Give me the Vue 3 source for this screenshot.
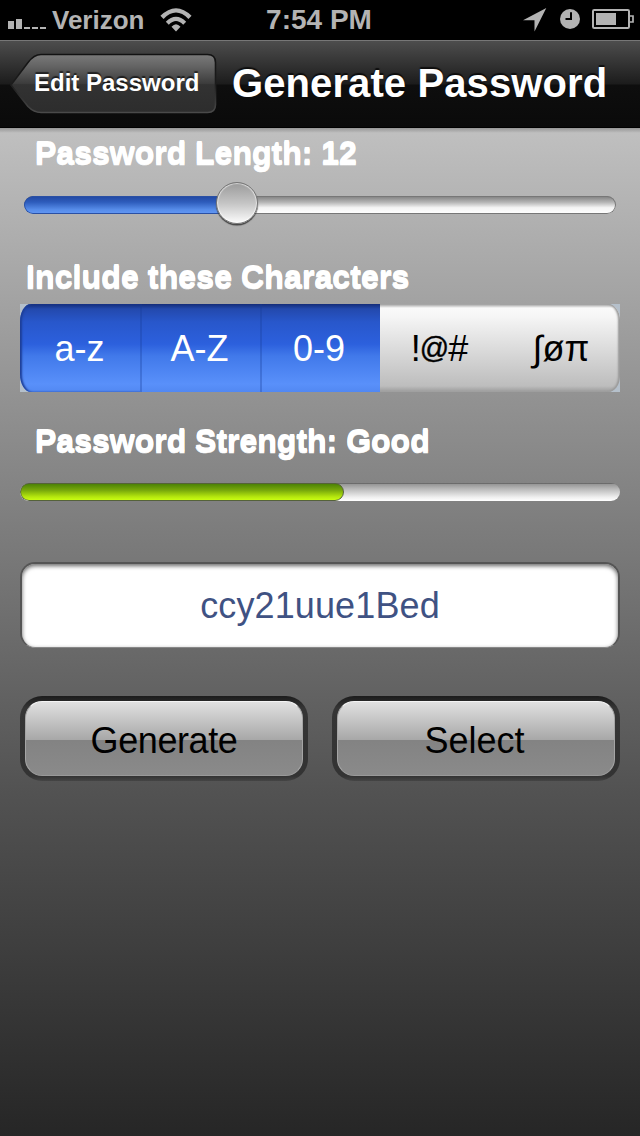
<script setup>
import { ref, computed } from 'vue'

const length = ref(12)
const sliderPercent = ref(36)
const strength = ref({ label: 'Good', percent: 54 })
const password = ref('ccy21uue1Bed')
const sets = ref([
  { id: 'lower', label: 'a-z', on: true },
  { id: 'upper', label: 'A-Z', on: true },
  { id: 'digit', label: '0-9', on: true },
  { id: 'symbol', label: '!@#', on: false },
  { id: 'extra', label: '∫øπ', on: false },
])
const fill = computed(() => ({ width: sliderPercent.value + '%' }))
const thumb = computed(() => ({ left: sliderPercent.value + '%' }))
const meter = computed(() => ({ width: strength.value.percent + '%' }))
</script>

<template>
  <div class="screen">
    <header class="status">
      <div class="status-left">
        <svg class="signal" width="38" height="10" viewBox="0 0 38 10">
          <path d="M0 2h6v8H0zM8 0h6v10H8zM16 8h6v2h-6zM24 8h6v2h-6zM32 8h6v2h-6z" />
        </svg>
        <span class="carrier">Verizon</span>
        <svg class="wifi" width="32" height="24" viewBox="0 0 32 24">
          <g fill="none" stroke="#b3b3b3">
            <path d="M2 9.400Q16-4.600 30 9.400" stroke-width="4.400" />
            <path d="M7.300 15.200Q16 6.400 24.700 15.200" stroke-width="4.200" />
          </g>
          <path d="M11.500 18.800Q16 13.600 20.500 18.800L16 23.400z" />
        </svg>
      </div>
      <span class="time">7:54 PM</span>
      <div class="status-right">
        <svg width="24" height="24" viewBox="0 0 24 24"><path d="M23.3 0L11.5 23.5V12.2H0z" /></svg>
        <svg class="clock" width="20" height="20" viewBox="0 0 20 20">
          <circle cx="10" cy="10" r="10" />
          <path d="M11 3.300V10H5.500" fill="none" stroke="#000" stroke-width="2" />
        </svg>
        <svg class="battery" width="42" height="20" viewBox="0 0 42 20">
          <rect x="1" y="1" width="36" height="18" rx="1.2" fill="none" stroke="#b3b3b3" stroke-width="2" />
          <rect x="4" y="4" width="20" height="12" />
          <path d="M38 7h3v6h-3" fill="none" stroke="#b3b3b3" stroke-width="1.7" />
        </svg>
      </div>
    </header>

    <nav class="nav">
      <button class="back">
        <svg class="back-shape" width="208" height="62" viewBox="0 0 208 62">
          <defs>
            <linearGradient id="backFill" x1="0" y1="0" x2="0" y2="1">
              <stop offset="0" stop-color="#7a7a7a" />
              <stop offset=".2" stop-color="#646464" />
              <stop offset=".5" stop-color="#3c3c3c" />
              <stop offset=".52" stop-color="#323232" />
              <stop offset="1" stop-color="#2d2d2d" />
            </linearGradient>
            <linearGradient id="backEdge" x1="0" y1="0" x2="0" y2="1">
              <stop offset="0" stop-color="#121212" />
              <stop offset=".5" stop-color="#1c1c1c" />
              <stop offset="1" stop-color="#4a4a4a" />
            </linearGradient>
          </defs>
          <path
            d="M1 32L18 9.500Q24 1.500 31 1.500H197.500Q205.500 1.500 205.500 9.500V51.500Q205.500 59.500 197.500 59.500H31Q24 59.500 18 53.500Z"
            fill="url(#backFill)"
            stroke="url(#backEdge)"
            stroke-width="1.600"
          />
        </svg>
        <span class="back-text">Edit Password</span>
      </button>
      <h1 class="title">Generate Password</h1>
    </nav>

    <main class="body">
      <h2 class="label">Password Length: {{ length }}</h2>
      <div class="slider">
        <div class="track"><div class="track-fill" :style="fill"></div></div>
        <div class="thumb" :style="thumb"></div>
      </div>

      <h2 class="label label-sets">Include these Characters</h2>
      <div class="segments">
        <button v-for="s in sets" :key="s.id" class="segment" :class="[s.id, { on: s.on }]">
          <span v-if="s.id === 'symbol'">!<span class="at">@</span>#</span>
          <span v-else>{{ s.label }}</span>
        </button>
      </div>

      <h2 class="label label-strength">Password Strength: {{ strength.label }}</h2>
      <div class="meter"><div class="meter-fill" :style="meter"></div></div>

      <div class="field">{{ password }}</div>

      <div class="actions">
        <button class="action"><span class="face generate">Generate</span></button>
        <button class="action"><span class="face select">Select</span></button>
      </div>
    </main>
  </div>
</template>

<style>
body {
  background: #262626;
}
</style>

<style scoped>
.screen {
  width: 640px;
  height: 1136px;
  overflow: hidden;
  display: flex;
  flex-direction: column;
  font-family: 'Liberation Sans', Arial, sans-serif;
}
button {
  border: 0;
  padding: 0;
  margin: 0;
  background: none;
  font: inherit;
  color: inherit;
}
h1,
h2 {
  margin: 0;
}
.status {
  height: 40px;
  flex: none;
  background: #000;
  color: #b3b3b3;
  font-weight: bold;
  display: grid;
  grid-template-columns: 1fr auto 1fr;
}
.status svg {
  fill: #b3b3b3;
  flex: none;
}
.status-left {
  display: flex;
  padding-left: 8px;
}
.signal {
  margin-top: 19px;
}
.carrier {
  width: 108px;
  margin-left: 6px;
  font-size: 26px;
  line-height: 40px;
}
.wifi {
  margin-top: 8px;
}
.time {
  font-size: 28px;
  line-height: 39px;
  margin-right: 2px;
}
.status-right {
  display: flex;
  justify-content: flex-end;
  padding-right: 6px;
  padding-top: 8px;
}
.clock {
  margin: 1px 12px 0 13px;
}
.battery {
  margin-top: 1px;
}
.nav {
  height: 88px;
  flex: none;
  box-sizing: border-box;
  border-top: 1px solid #777;
  border-bottom: 1px solid #000;
  background: linear-gradient(#4d4d4d 0, #1c1c1c 43px, #0e0e0e 44px, #0a0a0a 100%);
  display: flex;
  align-items: flex-start;
  padding-left: 10px;
  color: #fff;
}
.back {
  position: relative;
  width: 206px;
  height: 60px;
  margin-top: 12px;
  text-align: left;
}
.back-shape {
  position: absolute;
  left: 0;
  top: 0;
}
.back-text {
  position: relative;
  display: block;
  padding-left: 24px;
  font-size: 24px;
  font-weight: bold;
  line-height: 60px;
  text-shadow: 0 -2px 1px rgba(0, 0, 0, 0.6);
  white-space: nowrap;
}
.title {
  margin-left: 16px;
  font-size: 40px;
  line-height: 85px;
  letter-spacing: 0.1px;
  white-space: nowrap;
  text-shadow: 0 -2px 1px rgba(0, 0, 0, 0.7);
}
.body {
  flex: 1;
  display: flex;
  flex-direction: column;
  padding: 0 20px;
  background: linear-gradient(rgba(0, 0, 0, 0.22), transparent 5px),
    linear-gradient(#c0c0c0, #8f8f8f 28.500%, #646464 55%, #525252 66%, #262626);
}
.label {
  height: 52px;
  line-height: 52px;
  padding-left: 15px;
  font-size: 32px;
  color: #fff;
  text-shadow: 0 -1px #fff, 0 -2px #fff;
  -webkit-text-stroke: 0.5px #fff;
}
.slider {
  position: relative;
  display: flow-root;
  height: 44px;
  margin: 2px 4px 0;
}
.track {
  box-sizing: border-box;
  height: 18px;
  margin-top: 14px;
  border-radius: 9px;
  overflow: hidden;
  background: linear-gradient(#7e7e7e, #b5b5b5 35%, #f4f4f4 65%, #fff);
  box-shadow: inset 0 0 0 1px #777;
}
.track-fill {
  height: 18px;
  border-radius: 9px 0 0 9px;
  background: linear-gradient(#2147a0, #2e5dbd 35%, #568ce9 75%, #6398f5);
  box-shadow: inset 0 0 0 1px #2a50a4;
}
.thumb {
  position: absolute;
  top: 0;
  width: 40px;
  height: 40px;
  margin-left: -21px;
  border: 1px solid #777;
  border-radius: 50%;
  background: linear-gradient(#9b9b9b, #c4c4c4 50%, #fcfcfc);
  box-shadow: 0 1.500px 1px #444, inset 0 0 1px 1px rgba(255, 255, 255, 0.6);
}
.label-sets {
  margin-top: 26px;
  padding-left: 6px;
  letter-spacing: 0.12px;
}
.segments {
  display: grid;
  grid-template-columns: repeat(5, 1fr);
  height: 88px;
  background: #b5c0cb;
}
.segment {
  height: 88px;
  font-size: 36px;
  line-height: 87px;
  color: #000;
  background: linear-gradient(#9a9a9a 0, #fafafa 4px, #f6f6f6 12px, #dcdcdc 44px, #bdbdbd 82px, #a0a0a0 87px);
  white-space: nowrap;
}
.segment.on {
  color: #fff;
  background: linear-gradient(#142c78 0, #2349ad 5px, #2857cb 18px, #2c60dd 40px, #4179ea 52px, #5990fa 80px, #5288f2);
}
.segment.upper,
.segment.digit {
  box-shadow: inset 2px 0 rgba(24, 60, 150, 0.3);
}
.segment.lower {
  border-radius: 11px 0 0 11px / 18px 0 0 18px;
  box-shadow: inset 2px 0 2px #1d3f99;
}
.segment.extra {
  border-radius: 0 12px 12px 0 / 0 16px 16px 0;
  box-shadow: inset -2px 0 2px #999;
}
.at {
  font-size: 29px;
  line-height: 1;
  margin: 0 -1px;
  vertical-align: 3px;
  -webkit-text-stroke: 0.4px #000;
}
.segment.lower,
.segment.upper,
.segment.symbol {
  text-indent: -1px;
}
.segment.digit {
  text-indent: -2px;
}
.segment.extra {
  text-indent: 2px;
}
.label-strength {
  margin-top: 24px;
}
.meter {
  height: 18px;
  margin-top: 15px;
  border-radius: 9px;
  overflow: hidden;
  background: linear-gradient(#555 0, #999 1.500px, #bcbcbc 35%, #f0f0f0 80%, #fff);
}
.meter-fill {
  box-sizing: border-box;
  height: 18px;
  border: 1px solid #55623a;
  border-radius: 9px;
  background: linear-gradient(#4c8206, #79a90b 40%, #b5e70e 80%, #c9fc12);
}
.field {
  box-sizing: border-box;
  height: 86px;
  margin-top: 61px;
  border: 2px solid #555;
  border-bottom: 1px solid #888;
  border-radius: 15px;
  background: #fff;
  box-shadow: inset 0 2px 4px rgba(0, 0, 0, 0.6);
  color: #3f5283;
  font-size: 36px;
  line-height: 84px;
  letter-spacing: 0.12px;
  text-align: center;
}
.actions {
  display: grid;
  grid-template-columns: 1fr 1fr;
  gap: 24px;
  margin-top: 48px;
}
.action {
  height: 85px;
  padding: 5px 5px 8px;
  border-radius: 22px;
  background: linear-gradient(#1c1c1c, #353535 12px, #333 80px, #444);
}
.face {
  display: block;
  height: 73px;
  border: 1px solid;
  border-color: #f4f4f4 #a5a5a5 #999;
  border-radius: 17px;
  background: linear-gradient(#e0e0e0, #a7a7a7 38px, #838383 38.500px, #8a8a8a);
  color: #000;
  font-size: 36px;
  line-height: 77px;
}
.generate {
  letter-spacing: -0.4px;
}
.select {
  text-indent: -3px;
}
</style>
